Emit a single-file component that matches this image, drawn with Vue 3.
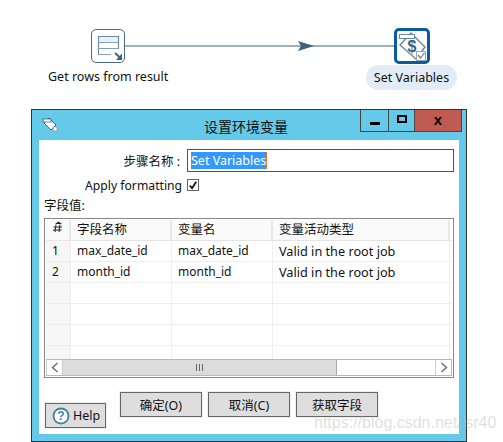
<script setup>
const columns = [
  { label: "字段名称", width: 101 },
  { label: "变量名", width: 101 },
  { label: "变量活动类型", width: 177 },
];
const rows = [
  ["1", "max_date_id", "max_date_id", "Valid in the root job"],
  ["2", "month_id", "month_id", "Valid in the root job"],
  ["", "", "", ""],
  ["", "", "", ""],
  ["", "", "", ""],
  ["", "", "", ""],
];
</script>

<template>
  <div class="page">
    <div class="canvas">
      <svg class="hop" width="503" height="109">
        <path d="M124 46H395" stroke="#3f607f" stroke-width="1.2" fill="none" />
        <path d="M298 41L314 46L298 51L301 46Z" fill="#3f607f" />
      </svg>

      <div class="node node-a">
        <div class="icon-box">
          <svg width="32" height="32" viewBox="0 0 32 32">
            <rect x="6" y="6" width="20" height="6" fill="#e4f3fa" />
            <path d="M6.5 25V6.5H26.5V19" stroke="#6f8ba1" stroke-width="1.2" fill="none" />
            <path d="M6.5 12.5H26.5M6.5 18.5H26.5M6.5 24.5H19" stroke="#8aa0b2" fill="none" />
            <path d="M23 23L29 28.5" stroke="#3f607f" stroke-width="1.8" fill="none" />
            <path d="M30 23.5V30H24Z" fill="#3f607f" />
          </svg>
        </div>
      </div>
      <div class="node-label label-a">Get rows from result</div>

      <div class="node node-b">
        <div class="icon-box selected">
          <svg width="30" height="30" viewBox="0 0 30 30">
            <path d="M3 14L14 2L28 16L19 28Z" fill="#fff" stroke="#6f8ba1" stroke-width="1.5" />
            <rect x="2.5" y="3.5" width="15" height="4" fill="#fff" stroke="#6f8ba1" />
            <text x="15" y="21" class="dollar">$</text>
            <rect x="19.5" y="20.5" width="9" height="9" fill="#fff" stroke="#9aa7b2" />
            <path d="M21 24L23.5 27L27.5 22" stroke="#5f7f96" stroke-width="1.2" fill="none" />
          </svg>
        </div>
      </div>
      <div class="node-label label-b">Set Variables</div>
    </div>

    <div class="dialog">
      <div class="titlebar">
        <svg class="title-icon" width="16" height="16" viewBox="0 0 16 16">
          <path d="M2 7L7 2L14 9L9 14Z" fill="#fff" stroke="#3f607f" />
          <rect x="1" y="3" width="8" height="3" fill="#fff" stroke="#3f607f" stroke-width="0.8" />
          <rect x="11" y="11" width="4" height="4" fill="#fff" stroke="#7d95a9" stroke-width="0.8" />
        </svg>
        <div class="title">设置环境变量</div>
        <div class="controls">
          <div class="ctl ctl-min"><span class="min-bar"></span></div>
          <div class="ctl ctl-max"><span class="max-box"></span></div>
          <div class="ctl ctl-close">x</div>
        </div>
      </div>

      <div class="body">
        <div class="step-row">
          <label class="step-label">步骤名称 :</label>
          <div class="input"><span class="selection">Set Variables</span></div>
        </div>
        <div class="format-row">
          <span class="format-label">Apply formatting</span>
          <span class="check">
            <svg width="11" height="11" viewBox="0 0 11 11">
              <path d="M2 5.5L4.5 8.5L9 1.5" stroke="#111" stroke-width="2" fill="none" />
            </svg>
          </span>
        </div>
        <div class="fields-label">字段值:</div>

        <div class="table">
          <div class="thead">
            <div class="cell idx head">
              <svg width="12" height="13" viewBox="0 0 12 13">
                <path d="M4 3.5L3 11M8 3.5L7 11M1.5 6H10M1 9H9.5" stroke="#222" fill="none" />
                <path d="M3 3L6.5 0.5L10 3Z" fill="#222" />
              </svg>
            </div>
            <div v-for="c in columns" :key="c.label" class="cell head" :style="{ width: c.width + 'px' }">
              {{ c.label }}
            </div>
          </div>
          <div class="tbody">
            <div v-for="(r, i) in rows" :key="i" class="row">
              <div class="cell idx">{{ r[0] }}</div>
              <div v-for="(c, j) in columns" :key="c.label" class="cell" :style="{ width: c.width + 'px' }">
                {{ r[j + 1] }}
              </div>
            </div>
          </div>
          <div class="scrollbar">
            <div class="arrow">
              <svg width="8" height="11" viewBox="0 0 8 11"><path d="M6.5 1L1.5 5.5L6.5 10" stroke="#666" stroke-width="1.3" fill="none" /></svg>
            </div>
            <div class="thumb"><span class="grip"></span></div>
            <div class="track"></div>
            <div class="arrow arrow-r">
              <svg width="8" height="11" viewBox="0 0 8 11"><path d="M1.5 1L6.5 5.5L1.5 10" stroke="#666" stroke-width="1.3" fill="none" /></svg>
            </div>
          </div>
        </div>

        <div class="footer">
          <button class="btn help">
            <svg width="18" height="18" viewBox="0 0 18 18">
              <circle cx="9" cy="9" r="7.5" fill="#fff" stroke="#3f7fa8" stroke-width="1.8" />
              <text x="9" y="13" class="q">?</text>
            </svg>
            <span>Help</span>
          </button>
          <div class="actions">
            <button class="btn action">确定(O)</button>
            <button class="btn action">取消(C)</button>
            <button class="btn action">获取字段</button>
          </div>
        </div>
      </div>
    </div>

    <div class="watermark">https://blog.csdn.net/lsr40</div>
  </div>
</template>

<style scoped>
.page {
  position: relative;
  width: 503px;
  height: 442px;
  overflow: hidden;
  background: #fff;
  font-family: "Noto Sans", "Noto Sans CJK SC", sans-serif;
  font-size: 12.5px;
  color: #111;
}
.canvas {
  position: relative;
  height: 109px;
}
.hop {
  position: absolute;
  left: 0;
  top: 0;
}
.node {
  position: absolute;
}
.node-a {
  left: 91px;
  top: 29px;
}
.node-b {
  left: 394px;
  top: 28px;
}
.icon-box {
  width: 34px;
  height: 34px;
  box-sizing: border-box;
  border: 1px solid #4a6a88;
  border-radius: 5px;
  background: #fff;
  display: flex;
  align-items: center;
  justify-content: center;
}
.icon-box svg {
  flex: none;
}
.icon-box.selected {
  width: 36px;
  height: 36px;
  border: 3px solid #0b5c9e;
}
.dollar {
  font-family: "Liberation Sans", sans-serif;
  font-size: 16px;
  font-weight: 700;
  text-anchor: middle;
  fill: #3f607f;
}
.node-label {
  position: absolute;
  white-space: nowrap;
}
.label-a {
  left: 48px;
  top: 68px;
}
.label-b {
  left: 366px;
  top: 65px;
  width: 91px;
  height: 25px;
  line-height: 25px;
  text-align: center;
  border-radius: 13px;
  background: #e1ecf6;
}
.dialog {
  margin-left: 31px;
  width: 436px;
  height: 333px;
  box-sizing: border-box;
  border: 1px solid #333;
  background: #65caea;
  padding: 0 7px 7px;
  display: flex;
  flex-direction: column;
}
.titlebar {
  position: relative;
  height: 30px;
  flex: none;
  display: flex;
  margin: 0 -7px;
  padding: 0 0 0 10px;
}
.title-icon {
  margin-top: 6px;
}
.title {
  position: absolute;
  left: 172px;
  top: 6px;
  font-size: 14px;
}
.controls {
  position: absolute;
  left: 328px;
  top: 0;
  display: flex;
  height: 21px;
  border: 1px solid #444;
  border-top: 0;
}
.ctl {
  display: flex;
  align-items: center;
  justify-content: center;
  border-right: 1px solid #444;
}
.ctl-min {
  width: 27px;
}
.ctl-max {
  width: 25px;
}
.ctl-close {
  width: 46px;
  border-right: 0;
  background: #c15a50;
  font-family: "Liberation Sans", sans-serif;
  font-weight: 700;
  font-size: 15px;
  line-height: 15px;
  padding-bottom: 3px;
  box-sizing: border-box;
  color: #000;
}
.min-bar {
  width: 10px;
  height: 3px;
  margin-top: 5px;
  background: #000;
}
.max-box {
  width: 6px;
  height: 4px;
  border: 2px solid #000;
  margin-bottom: 3px;
}
.body {
  flex: 1;
  background: #fff;
  padding: 9px 5px 0;
  display: flex;
  flex-direction: column;
}
.step-row {
  display: flex;
  align-items: center;
  height: 23px;
}
.step-label {
  width: 136px;
  text-align: right;
  margin-right: 7px;
}
.input {
  width: 267px;
  height: 23px;
  box-sizing: border-box;
  border: 1px solid #2f5a7e;
  padding: 2px 3px;
}
.selection {
  display: inline-block;
  height: 17px;
  line-height: 17px;
  background: #3399ff;
  color: #fff;
  border-right: 1px solid #d97b20;
}
.format-row {
  display: flex;
  align-items: center;
  height: 14px;
  margin-top: 6px;
  margin-left: 41px;
}
.format-label {
  width: 102px;
  font-size: 12.2px;
}
.check {
  width: 12px;
  height: 12px;
  box-sizing: border-box;
  border: 1px solid #666;
  display: flex;
  align-items: center;
  justify-content: center;
}
.fields-label {
  margin-top: 6px;
  height: 20px;
  line-height: 16px;
}
.table {
  width: 410px;
  height: 160px;
  box-sizing: border-box;
  border: 1px solid #888;
  padding: 1px;
  display: flex;
  flex-direction: column;
}
.thead,
.row {
  display: flex;
  flex: none;
}
.thead {
  height: 20px;
  border-bottom: 1px solid #e4e4e4;
}
.tbody {
  flex: 1;
  overflow: hidden;
}
.row {
  height: 21px;
  box-sizing: border-box;
  border-bottom: 1px solid #eee;
  font-size: 12px;
}
.row .cell:last-child {
  font-size: 12.7px;
}
.cell {
  box-sizing: border-box;
  border-right: 1px solid #eee;
  padding-left: 6px;
  line-height: 20px;
  white-space: nowrap;
  overflow: hidden;
}
.cell.head {
  background: #fafafa;
  border-right: 2px solid #e8e8e8;
}
.idx {
  width: 25px;
  flex: none;
  background: #f6f6f6;
  padding-left: 6px;
}
.scrollbar {
  flex: none;
  height: 17px;
  display: flex;
  box-sizing: border-box;
  border: 1px solid #b8b8b8;
  border-left: 1px solid #ccc;
  background: #fff;
}
.arrow {
  width: 16px;
  display: flex;
  align-items: center;
  justify-content: center;
  box-sizing: border-box;
  border-right: 1px solid #ccc;
}
.arrow-r {
  border-right: 0;
  border-left: 1px solid #ccc;
}
.thumb {
  width: 274px;
  background: #dcdcdc;
  box-sizing: border-box;
  border-right: 1px solid #aaa;
  display: flex;
  align-items: center;
  justify-content: center;
}
.grip {
  width: 7px;
  height: 7px;
  background: repeating-linear-gradient(90deg, #666 0 1px, transparent 1px 3px);
}
.track {
  flex: 1;
}
.footer {
  position: relative;
  flex: 1;
}
.btn {
  box-sizing: border-box;
  border: 1px solid #666;
  outline: 1px solid #f0f0f0;
  background: #dedede;
  font: inherit;
  color: #111;
  padding: 0;
}
.actions {
  display: flex;
  gap: 6px;
  margin-left: 76px;
  padding-top: 14px;
}
.action {
  width: 82px;
  height: 25px;
}
.help {
  position: absolute;
  left: 1px;
  top: 25px;
  width: 61px;
  height: 25px;
  display: flex;
  align-items: center;
  gap: 3px;
  padding-left: 6px;
}
.q {
  font-family: "Liberation Sans", sans-serif;
  font-size: 12px;
  font-weight: 700;
  text-anchor: middle;
  fill: #3f7fa8;
}
.watermark {
  position: absolute;
  left: 314px;
  top: 414px;
  font-family: "Liberation Sans", sans-serif;
  font-size: 16px;
  color: rgba(170, 170, 170, 0.38);
  white-space: nowrap;
}
</style>
